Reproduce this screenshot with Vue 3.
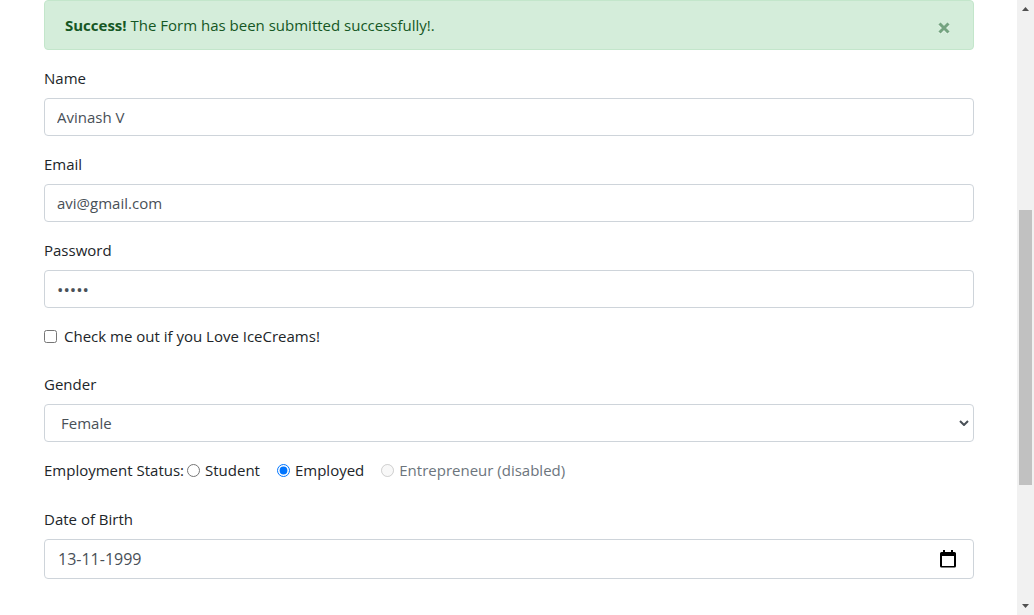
<script setup>
import { ref } from 'vue'

const showAlert = ref(true)
const name = ref('Avinash V')
const email = ref('avi@gmail.com')
const password = ref('avi99')
const lovesIceCream = ref(false)
const gender = ref('Female')
const status = ref('employed')
const birthDate = ref('13-11-1999')

const statuses = [
  { value: 'student', label: 'Student', disabled: false },
  { value: 'employed', label: 'Employed', disabled: false },
  { value: 'entrepreneur', label: 'Entrepreneur (disabled)', disabled: true }
]
</script>

<template>
  <div class="page">
    <main class="content">
      <div v-if="showAlert" class="alert" role="alert">
        <p><strong>Success!</strong> The Form has been submitted successfully!.</p>
        <button type="button" class="close" aria-label="Close" @click="showAlert = false">
          <svg width="12" height="12" viewBox="0 0 12 12" aria-hidden="true">
            <path class="close-shade" d="M1.500 2.500l9 9M10.500 2.500l-9 9" />
            <path class="close-mark" d="M1.500 1.500l9 9M10.500 1.500l-9 9" />
          </svg>
        </button>
      </div>

      <form @submit.prevent>
        <div class="group">
          <label for="name">Name</label>
          <input id="name" v-model="name" class="control" type="text" />
        </div>
        <div class="group">
          <label for="email">Email</label>
          <input id="email" v-model="email" class="control" type="email" />
        </div>
        <div class="group">
          <label for="password">Password</label>
          <input id="password" v-model="password" class="control password" type="password" />
        </div>

        <div class="check">
          <input id="icecream" v-model="lovesIceCream" type="checkbox" />
          <label for="icecream">Check me out if you Love IceCreams!</label>
        </div>

        <div class="group">
          <label for="gender">Gender</label>
          <div class="select-wrap">
            <select id="gender" v-model="gender" class="control select">
              <option>Male</option>
              <option>Female</option>
            </select>
            <svg class="chevron" width="10" height="6" viewBox="0 0 10 6" aria-hidden="true">
              <path d="M1 1l4 4 4-4" />
            </svg>
          </div>
        </div>

        <div class="status" role="radiogroup" aria-labelledby="status-label">
          <span id="status-label" class="status-label">Employment Status:</span>
          <div v-for="s in statuses" :key="s.value" class="option">
            <input
              :id="s.value"
              v-model="status"
              type="radio"
              name="status"
              :value="s.value"
              :disabled="s.disabled"
            />
            <label :for="s.value" :class="{ muted: s.disabled }">{{ s.label }}</label>
          </div>
        </div>

        <div class="group">
          <label for="dob">Date of Birth</label>
          <div class="control date">
            <input id="dob" v-model="birthDate" type="text" inputmode="numeric" />
            <button type="button" aria-label="Open calendar">
              <svg width="18" height="20" viewBox="0 0 18 20" aria-hidden="true">
                <path
                  fill-rule="evenodd"
                  d="M4 1h2v2h6V1h2v2h1.500q1.500 0 1.500 1.500v12.500q0 1.500-1.500 1.500h-13q-1.500 0-1.500-1.500v-12.500q0-1.500 1.500-1.500H4zM3 7v10h12V7z"
                />
              </svg>
            </button>
          </div>
        </div>
      </form>
    </main>

    <div class="scrollbar" aria-hidden="true">
      <svg width="7" height="4" viewBox="0 0 7 4"><path d="M0 4L3.500 0 7 4z" /></svg>
      <div class="track">
        <div class="before"></div>
        <div class="thumb"></div>
        <div class="after"></div>
      </div>
      <svg width="7" height="4" viewBox="0 0 7 4"><path d="M0 0L3.500 4 7 0z" /></svg>
    </div>
  </div>
</template>

<style>
body {
  margin: 0;
  background: #fff;
}
</style>

<style scoped>
.page {
  display: grid;
  grid-template-columns: 1fr 17px;
  min-height: 100vh;
  font: 15px/24px "Open Sans", "Noto Sans", sans-serif;
  color: #212529;
}
.page *,
.page {
  box-sizing: border-box;
}
.content {
  padding: 0 43px 0 44px;
}
.alert {
  display: flex;
  align-items: center;
  justify-content: space-between;
  height: 50px;
  margin-bottom: 16px;
  padding: 0 20px;
  border: 1px solid #c3e6cb;
  border-radius: 4px;
  background: #d4edda;
  color: #155724;
}
.alert p {
  margin: 0;
}
button {
  display: flex;
  margin: 0;
  padding: 0;
  border: 0;
  background: none;
  cursor: pointer;
}
.close {
  padding: 6px 3px 0;
}
.close path {
  fill: none;
  stroke-width: 3;
}
.close .close-shade {
  stroke: #e8f6eb;
}
.close .close-mark {
  stroke: #74a480;
}
.group {
  display: flex;
  flex-direction: column;
  gap: 8px;
  margin-bottom: 16px;
}
.control {
  width: 100%;
  height: 38px;
  margin: 0;
  padding: 0 12px;
  border: 1px solid #ced4da;
  border-radius: 4px;
  background: #fff;
  color: #495057;
  font: inherit;
}
.password {
  font-size: 17px;
}
.check {
  display: flex;
  align-items: center;
  gap: 7px;
  margin-bottom: 24px;
}
input[type="checkbox"],
input[type="radio"] {
  flex: none;
  width: 13px;
  height: 13px;
  margin: 0;
  accent-color: #0075ff;
}
.select-wrap {
  display: grid;
  align-items: center;
}
.select-wrap > * {
  grid-area: 1 / 1;
}
.select {
  appearance: none;
  padding: 0 16px;
}
.chevron {
  justify-self: end;
  margin-right: 5px;
  fill: none;
  stroke: #495057;
  stroke-width: 2;
  pointer-events: none;
}
.status {
  display: flex;
  align-items: center;
  margin-bottom: 25px;
}
.status-label {
  margin-right: 3px;
}
.option {
  display: flex;
  align-items: center;
  gap: 5px;
  margin-right: 17px;
}
.muted {
  color: #6c757d;
}
.date {
  display: flex;
  align-items: center;
  height: 40px;
  padding: 0 16px 0 13px;
}
.date input {
  flex: 1;
  min-width: 0;
  padding: 0;
  border: 0;
  background: none;
  color: inherit;
  font: inherit;
  font-size: 16px;
}
.scrollbar {
  display: flex;
  flex-direction: column;
  align-items: center;
  justify-content: space-between;
  padding: 7px 0;
  background: #f1f1f1;
}
.scrollbar svg {
  flex: none;
  fill: #505050;
}
.track {
  display: flex;
  flex: 1;
  flex-direction: column;
  width: 13px;
  margin: 6px 0;
}
.before {
  flex: 193;
}
.thumb {
  flex: 275;
  background: #c1c1c1;
}
.after {
  flex: 113;
}
</style>
